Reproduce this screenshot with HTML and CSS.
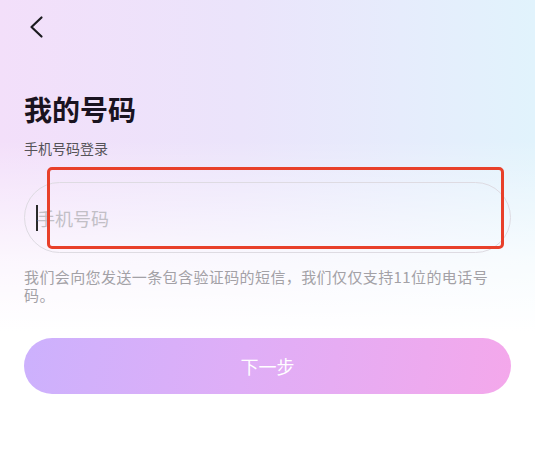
FILE: index.html
```html
<!DOCTYPE html>
<html lang="zh-CN">
<head>
<meta charset="utf-8">
<title>我的号码</title>
<link rel="stylesheet" href="styles.css">
</head>
<body>
<div class="page">
  <header class="topbar">
    <svg class="back" width="24" height="24" viewBox="0 0 24 24" aria-hidden="true">
      <polyline points="17.5,2.5 7.5,12 17.5,21.5" fill="none" stroke="#1b1b1f" stroke-width="2.2" stroke-linecap="round" stroke-linejoin="round"/>
    </svg>
  </header>
  <h1 class="title">我的号码</h1>
  <p class="subtitle">手机号码登录</p>
  <div class="field">
    <span class="caret"></span>
    <span class="placeholder">手机号码</span>
  </div>
  <p class="hint">我们会向您发送一条包含验证码的短信，我们仅仅支持11位的电话号码。</p>
  <button class="next">下一步</button>
</div>
<div class="highlight"></div>
</body>
</html>
```
FILE: styles.css
```css
html, body {
  margin: 0;
  padding: 0;
}
body {
  width: 535px;
  height: 467px;
  overflow: hidden;
  position: relative;
  font-family: "Noto Sans CJK SC", "Noto Sans", sans-serif;
  background:
    linear-gradient(to bottom, rgba(255,255,255,0) 0%, rgba(255,255,255,0) 30%, rgba(255,255,255,0.75) 56%, #ffffff 71%),
    linear-gradient(to right, #f3dffa 0%, #ebe4fb 45%, #e6ecfc 75%, #e1f3fc 100%);
}
.page {
  padding: 0 24px;
  display: flex;
  flex-direction: column;
}
.topbar {
  height: 54px;
  display: flex;
  align-items: flex-start;
  padding-top: 15px;
  box-sizing: border-box;
}
.back {
  display: block;
}
.title {
  margin: 39px 0 0;
  font-size: 28px;
  line-height: 32px;
  font-weight: 700;
  color: #1a1320;
}
.subtitle {
  margin: 14px 0 0;
  font-size: 14px;
  line-height: 18px;
  color: #555358;
}
.field {
  margin-top: 25px;
  height: 71px;
  box-sizing: border-box;
  border: 1.5px solid #dedbe2;
  border-radius: 36px;
  display: flex;
  align-items: center;
  padding-left: 11px;
}
.caret {
  width: 2px;
  height: 26px;
  background: #2a2a2a;
  display: block;
}
.placeholder {
  font-size: 18px;
  color: #c2bfc6;
  margin-left: -1px;
}
.hint {
  margin: 15px 0 0;
  max-width: 476px;
  font-size: 15px;
  letter-spacing: 0.4px;
  line-height: 18px;
  color: #a3a1a6;
}
.next {
  margin-top: 34px;
  height: 56px;
  border: none;
  border-radius: 28px;
  background: linear-gradient(100deg, #ccb1fd 0%, #dfaef7 45%, #f4a8eb 100%);
  color: #ffffff;
  font-family: inherit;
  font-size: 18px;
  padding: 0;
}
.highlight {
  position: absolute;
  left: 47px;
  top: 167px;
  width: 457px;
  height: 82px;
  box-sizing: border-box;
  border: 3px solid #e8402a;
  border-radius: 5px;
}
```
